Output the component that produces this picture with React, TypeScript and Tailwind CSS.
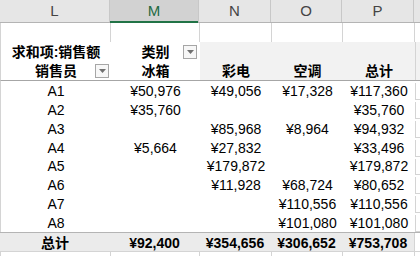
const font = "font-['Liberation_Sans','Noto_Sans_CJK_SC',sans-serif]"

const W = ['w-[110px]', 'w-[89px]', 'w-[72px]', 'w-[71px]', 'w-[72px]']

const rows: [string, (number | null)[]][] = [
  ['A1', [50976, 49056, 17328, 117360]],
  ['A2', [35760, null, null, 35760]],
  ['A3', [null, 85968, 8964, 94932]],
  ['A4', [5664, 27832, null, 33496]],
  ['A5', [null, 179872, null, 179872]],
  ['A6', [null, 11928, 68724, 80652]],
  ['A7', [null, null, 110556, 110556]],
  ['A8', [null, null, 101080, 101080]],
]
const totals = [92400, 354656, 306652, 753708]

const yen = (n: number | null) => (n == null ? '' : '¥' + n.toLocaleString('en-US'))

function Dropdown() {
  return (
    <span className="flex h-[14px] w-[14px] items-center justify-center border border-[#a6a6a6] bg-[#f7f7f7]">
      <svg width="7" height="4" viewBox="0 0 7 4">
        <path d="M0 0h7L3.5 4z" fill="#707070" />
      </svg>
    </span>
  )
}

// gridline tail to the right of the pivot (column Q)
function Tail() {
  return <div className="flex-1 border-l border-b border-[#d4d4d4]" />
}

export default function App() {
  return (
    <div className={`h-[256px] w-[420px] overflow-hidden bg-white text-[14px] text-black ${font}`}>
      {/* column letters */}
      <div className="flex h-[23px] border-b border-[#b4b4b4] bg-[#e6e6e6] text-[#444]">
        {['L', 'M', 'N', 'O', 'P'].map((c, i) => (
          <div
            key={c}
            className={`${W[i]} flex items-center justify-center border-r border-[#c8c8c8] pt-[1px] text-[15px] ${
              i === 1 ? 'relative bg-[#d2d2d2] text-[#1e6a42]' : ''
            }`}
          >
            {c}
            {i === 1 && <span className="absolute -bottom-[1px] left-0 right-0 h-[2px] bg-[#217346]" />}
          </div>
        ))}
        <div className="flex-1" />
      </div>

      {/* empty row 2 */}
      <div className="flex h-[19px] border-l border-[#d4d4d4]">
        {W.map((w, i) => (
          <div key={i} className={`${w} border-r border-[#d4d4d4]`} />
        ))}
        <div className="flex-1" />
      </div>

      {/* pivot header rows */}
      <div className="flex border-b border-[#a6a6a6] border-l border-l-[#d4d4d4] font-bold">
        <div className={`${W[0]} flex flex-col`}>
          <div className="flex h-[19px] items-center justify-center pt-[2px]">求和项:销售额</div>
          <div className="relative flex h-[19px] items-center justify-center pt-[2px]">
            销售员
            <span className="absolute right-[2px] top-[3px]">
              <Dropdown />
            </span>
          </div>
        </div>
        <div className={`${W[1]} flex flex-col`}>
          <div className="relative flex h-[19px] items-center justify-center pt-[2px]">
            类别
            <span className="absolute right-[3px] top-[3px]">
              <Dropdown />
            </span>
          </div>
          <div className="flex h-[19px] items-center justify-center pt-[2px]">冰箱</div>
        </div>
        {['彩电', '空调', '总计'].map((t, i) => (
          <div key={t} className={`${W[i + 2]} flex flex-col bg-[#f2f2f2]`}>
            <div className="h-[19px]" />
            <div className="flex h-[19px] items-center justify-center pt-[2px]">{t}</div>
          </div>
        ))}
        <div className="flex-1 border-l border-[#d4d4d4] bg-[#f2f2f2]" />
      </div>

      {/* data rows */}
      {rows.map(([name, vals]) => (
        <div key={name} className="flex h-[18.875px] border-l border-[#d4d4d4] pt-[2px]">
          <div className={`${W[0]} flex items-center justify-center`}>{name}</div>
          {vals.map((v, i) => (
            <div key={i} className={`${W[i + 1]} flex items-center justify-center`}>
              {yen(v)}
            </div>
          ))}
          <Tail />
        </div>
      ))}

      {/* total row */}
      <div className="flex h-[19px] border-t border-[#b4b4b4] bg-[#ebebeb] font-bold">
        <div className={`${W[0]} flex items-center justify-center pt-[2px]`}>总计</div>
        {totals.map((v, i) => (
          <div key={i} className={`${W[i + 1]} flex items-center justify-center pt-[2px]`}>
            {yen(v)}
          </div>
        ))}
        <div className="flex-1 border-l border-[#d4d4d4] bg-white" />
      </div>

      {/* next empty row */}
      <div className="flex h-[19px] border-t border-[#d4d4d4] border-l border-l-[#d4d4d4]">
        {W.map((w, i) => (
          <div key={i} className={`${w} border-r border-[#d4d4d4]`} />
        ))}
        <div className="flex-1" />
      </div>
    </div>
  )
}
